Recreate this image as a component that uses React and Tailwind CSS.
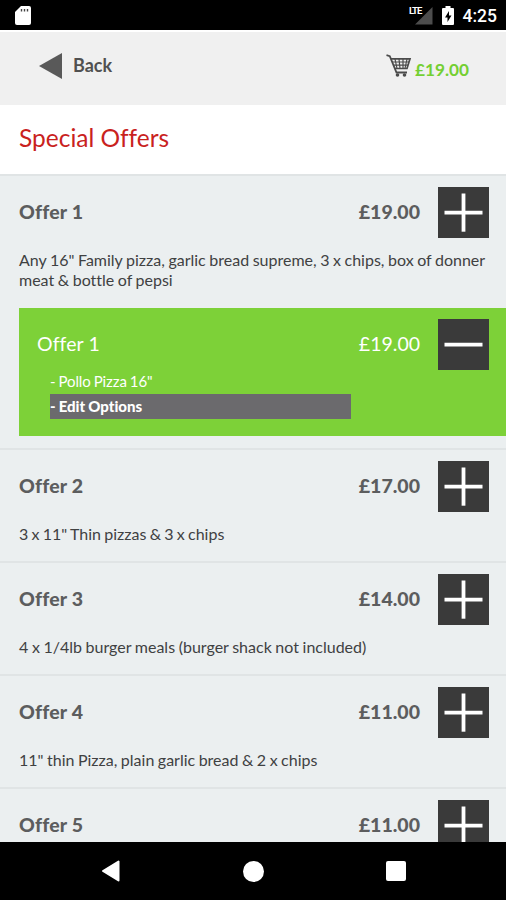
const offers = [
  {
    name: "Offer 1",
    price: "£19.00",
    text: 'Any 16" Family pizza, garlic bread supreme, 3 x chips, box of donner meat & bottle of pepsi',
    height: "h-[274px]",
    spacing: "[word-spacing:-0.55px]",
    selected: true,
  },
  {
    name: "Offer 2",
    price: "£17.00",
    text: '3 x 11" Thin pizzas & 3 x chips',
    height: "h-[113px]",
    spacing: "[word-spacing:-0.85px]",
  },
  {
    name: "Offer 3",
    price: "£14.00",
    text: "4 x 1/4lb burger meals (burger shack not included)",
    height: "h-[113px]",
    spacing: "[word-spacing:-0.5px]",
  },
  {
    name: "Offer 4",
    price: "£11.00",
    text: '11" thin Pizza, plain garlic bread & 2 x chips',
    height: "h-[113px]",
    spacing: "[word-spacing:-0.6px]",
  },
  { name: "Offer 5", price: "£11.00", text: "", height: "h-[113px]", spacing: "" },
];

function SquareButton({ minus }) {
  return (
    <button className="h-[51px] w-[51px] shrink-0 bg-[#3a3a3a]" aria-label={minus ? "Remove" : "Add"}>
      <svg viewBox="0 0 51 51" className="block h-full w-full" stroke="#fff" strokeWidth="3.800">
        <path d="M6.500 25.700H44.500" />
        {!minus && <path d="M25.500 6.500V44.700" />}
      </svg>
    </button>
  );
}

function StatusBar() {
  return (
    <div className="flex h-[30px] shrink-0 items-start bg-black pl-[15px] pr-[9px] text-white">
      <svg viewBox="0 0 16 20" className="mt-[5.5px] h-5 w-4">
        <path d="M6 0H14a2 2 0 0 1 2 2V17a2 2 0 0 1-2 2H2a2 2 0 0 1-2-2V6Z" fill="#fff" />
        <path d="M6.500 3v2.500M9.500 3v2.500M12.500 3v2.500" stroke="#444" strokeWidth="1.400" />
      </svg>
      <div className="ml-auto flex">
        <span className="mt-[6px] font-[Roboto] text-[9.5px] font-bold leading-[9px] tracking-[-0.9px]">LTE</span>
        <svg viewBox="0 0 18 18" className="-ml-[7px] mt-[7px] h-[18px] w-[18px]">
          <path d="M17.500 0V17.500H0Z" fill="#4d4d4d" />
        </svg>
        <svg viewBox="0 0 12 19" className="ml-[9px] mt-[6px] h-[19px] w-3">
          <path d="M3.500 0h5v2H11q1 0 1 1V18q0 1-1 1H1q-1 0-1-1V3q0-1 1-1H3.500Z" fill="#fff" />
          <path d="M7 5L3 11.500H5.500V16L9.500 9.500H7Z" fill="#000" />
        </svg>
        <span className="ml-[9px] mt-[6px] font-[Roboto] text-[17.5px] font-medium leading-5">4:25</span>
      </div>
    </div>
  );
}

function Cart() {
  return (
    <svg viewBox="0 0 26 24" className="h-6 w-[26px]" fill="none" stroke="#4b4b4b">
      <path d="M0.500 1.200L3.800 2.200L10.500 18.500H21" strokeWidth="1.800" />
      <path d="M5 4.800H24L21 14.500H9" strokeWidth="1.700" />
      <path d="M6 8H23M7.500 11.200H22M9 5L11 14.500M13 5L14 14.500M17 5V14.500M21 5L19 14.500" strokeWidth="1.200" />
      <g fill="#4b4b4b" stroke="none">
        <circle cx="11.500" cy="21" r="1.800" />
        <circle cx="18.500" cy="21" r="1.800" />
      </g>
    </svg>
  );
}

function OfferRow({ offer }) {
  return (
    <section className={`${offer.height} shrink-0 border-b-2 border-[#e0e4e5]`}>
      <div className="flex items-center pl-[19px] pr-[17px] pt-[11px] text-[19px] font-black leading-6 text-[#5c5d5e]">
        <h2 className="pb-[2px] text-[19.5px] tracking-[0.2px]">{offer.name}</h2>
        <span className="ml-auto mr-[18px] pb-[2px] text-[19.5px]">{offer.price}</span>
        <SquareButton />
      </div>
      <p className={`${offer.spacing} pl-[19px] pr-[10px] pt-[12px] text-[16px] leading-5 text-[#3f4142]`}>
        {offer.text}
      </p>
      {offer.selected && (
        <div className="ml-[19px] mt-[18px] h-[128px] bg-[#7dd138] text-white">
          <div className="flex items-center pl-[18px] pr-[17px] pt-[11px] text-[19.5px] leading-6">
            <h3 className="pb-[1px] tracking-[0.1px]">{offer.name}</h3>
            <span className="ml-auto mr-[18px] pb-[1px]">{offer.price}</span>
            <SquareButton minus />
          </div>
          <ul className="ml-[31px] w-[301px] text-[15px]">
            <li className="h-6 leading-[23px] tracking-[-0.1px] [word-spacing:-0.7px]">- Pollo Pizza 16"</li>
            <li className="h-[25px] bg-[#6b6a6d] font-black leading-[24px] [word-spacing:-0.5px]">
              - Edit Options
            </li>
          </ul>
        </div>
      )}
    </section>
  );
}

export default function App() {
  return (
    <div className="flex h-[900px] w-[506px] flex-col overflow-hidden bg-[#ebeff0] font-[Lato,sans-serif] [font-variant-ligatures:none]">
      <StatusBar />
      <header className="flex h-[75px] shrink-0 border-t-2 border-white bg-[#f0f0f0] pl-[39px] pr-[37px]">
        <div className="flex h-[68px] items-center gap-[11px] text-[18px] font-bold text-[#505050]">
          <svg viewBox="0 0 23 26" className="h-[26px] w-[23px]">
            <path d="M23 0V26L0 13Z" fill="#595959" />
          </svg>
          <span className="pb-[2px]">Back</span>
        </div>
        <div className="ml-auto flex gap-[3px] pt-[22px] text-[17.2px] font-bold text-[#74cf32]">
          <Cart />
          <span className="pt-[4px] leading-6">£19.00</span>
        </div>
      </header>
      <div className="flex h-[71px] shrink-0 items-center border-b-2 border-[#e0e4e5] bg-white pb-[2px] pl-[19px]">
        <h1 className="text-[24.5px] text-[#c9221d]">Special Offers</h1>
      </div>
      <main className="flex min-h-0 grow flex-col overflow-hidden">
        {offers.map((offer) => (
          <OfferRow key={offer.name} offer={offer} />
        ))}
      </main>
      <nav className="flex h-[58px] shrink-0 items-center justify-between bg-black pl-[102px] pr-[100px]">
        <svg viewBox="0 0 18 22" className="h-[22px] w-[18px]">
          <path d="M16.500 1.500V20.500L1 11Z" fill="#fff" stroke="#fff" strokeWidth="2" strokeLinejoin="round" />
        </svg>
        <div className="h-[21px] w-[21px] rounded-full bg-white" />
        <div className="h-5 w-5 rounded-[2px] bg-white" />
      </nav>
    </div>
  );
}
